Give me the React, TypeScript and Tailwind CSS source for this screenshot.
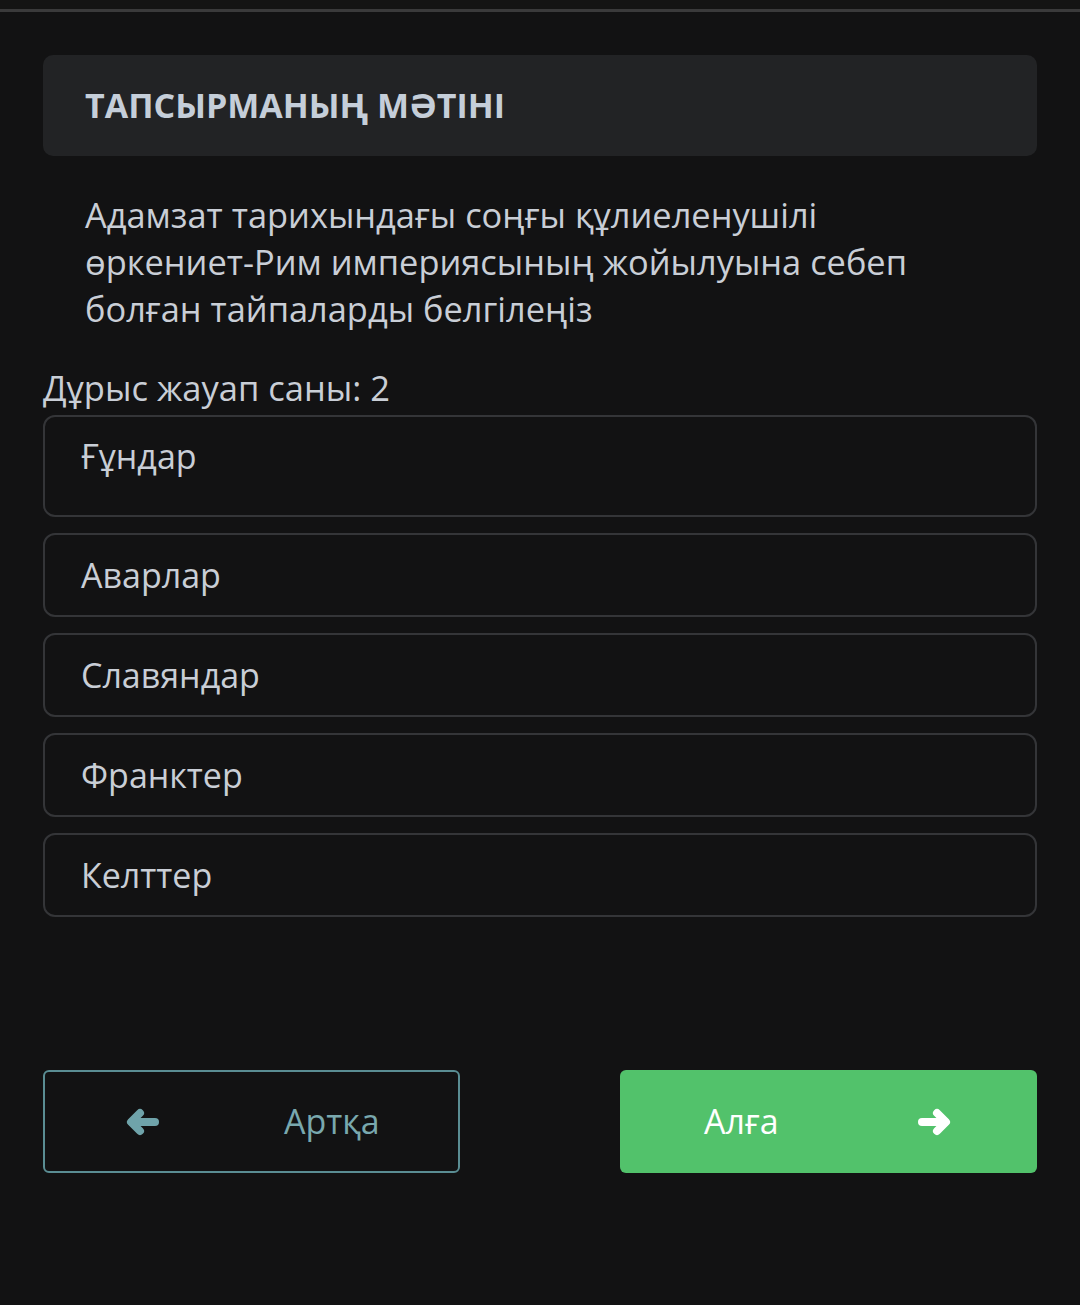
const options = ["Ғұндар", "Аварлар", "Славяндар", "Франктер", "Келттер"];

function Arrow({ dir, className }: { dir: 'left' | 'right'; className?: string }) {
  return (
    <svg
      viewBox="0 0 34 28"
      className={className}
      fill="none"
      stroke="currentColor"
      strokeWidth={8}
      strokeLinecap="round"
      strokeLinejoin="round"
      style={dir === 'right' ? { transform: 'scaleX(-1)' } : undefined}
    >
      <polyline points="14,5 5,14 14,23" />
      <line x1="6" y1="14" x2="29" y2="14" />
    </svg>
  );
}

export default function App() {
  return (
    <div
      className="w-[1080px] h-[1305px] bg-[#121213] text-[#c9ced6] overflow-hidden"
      style={{ fontFamily: '"Open Sans", "Noto Sans", sans-serif' }}
    >
      <div className="h-[9px] bg-[#141414]" />
      <div className="h-[3px] bg-[#3a3a3b]" />

      <div className="px-[43px] pt-[43px]">
        {/* Task header */}
        <div className="h-[101px] rounded-[10px] bg-[#222325] flex items-center px-[42px]">
          <h1 className="text-[34px] font-bold text-[#c5ced9]">ТАПСЫРМАНЫҢ МӘТІНІ</h1>
        </div>

        {/* Question */}
        <p className="mt-[35px] px-[42px] text-[34.4px] leading-[47px] text-[#c9ced6]">
          Адамзат тарихындағы соңғы құлиеленушілі<br />
          өркениет-Рим империясының жойылуына себеп<br />
          болған тайпаларды белгілеңіз
        </p>

        <div className="mt-[35px] text-[34.5px] leading-[42px] text-[#c9ced6]">Дұрыс жауап саны: 2</div>

        {/* Options */}
        <div className="flex flex-col gap-[16px] mt-[6px]">
          {options.map((opt, i) => (
            <div
              key={opt}
              className={`border-2 border-[#343538] rounded-[12px] px-[36px] text-[34px] text-[#c9ced6] ${i === 0 ? 'h-[102px] pt-[14px]' : 'h-[84px] flex items-center'}`}
            >
              {opt}
            </div>
          ))}
        </div>

        {/* Navigation */}
        <div className="mt-[153px] flex justify-between">
          <button className="w-[417px] h-[103px] border-2 border-[#5a8d93] rounded-[6px] flex items-center text-[#79a8ae] text-[34px]">
            <Arrow dir="left" className="w-[34px] h-[28px] ml-[81px] text-[#6fa3aa]" />
            <span className="ml-[124px]">Артқа</span>
          </button>
          <button className="w-[417px] h-[103px] bg-[#52c26b] rounded-[6px] flex items-center text-white text-[34px]">
            <span className="ml-[84px]">Алға</span>
            <Arrow dir="right" className="w-[34px] h-[28px] ml-[138px]" />
          </button>
        </div>
      </div>
    </div>
  );
}
